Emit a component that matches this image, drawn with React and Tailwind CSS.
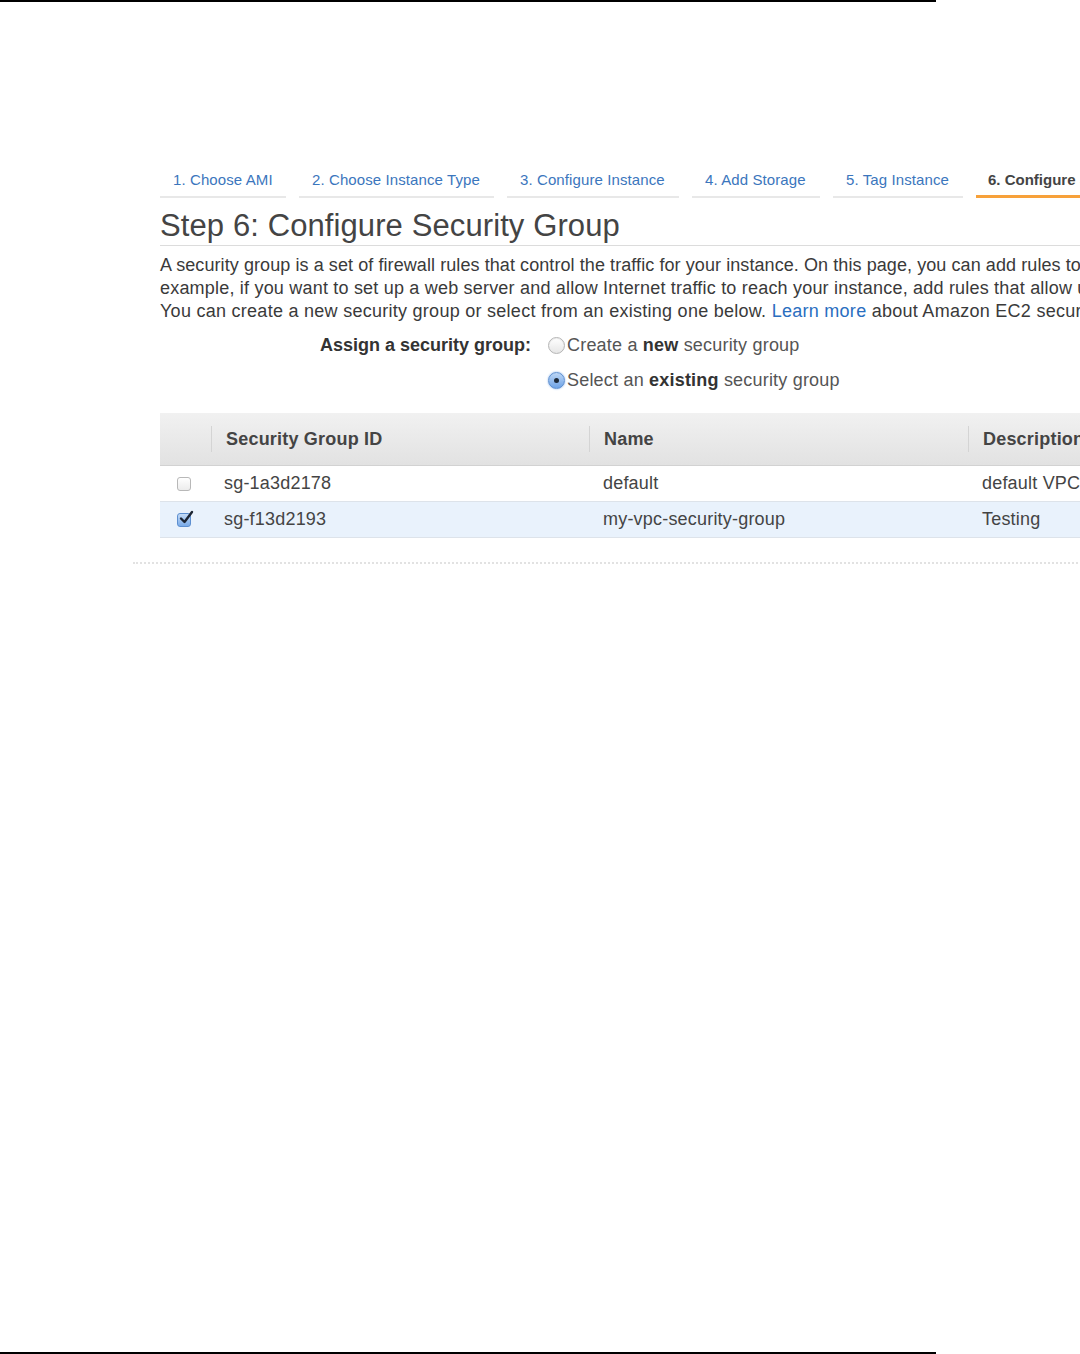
import React from "react";

const tabs = [
  { label: "1. Choose AMI", w: "w-[126px]" },
  { label: "2. Choose Instance Type", w: "w-[195px]" },
  { label: "3. Configure Instance", w: "w-[172px]" },
  { label: "4. Add Storage", w: "w-[128px]" },
  { label: "5. Tag Instance", w: "w-[130px]" },
];

const rows = [
  { id: "sg-1a3d2178", name: "default", desc: "default VPC security group", checked: false },
  { id: "sg-f13d2193", name: "my-vpc-security-group", desc: "Testing", checked: true },
];

function Radio({ checked }) {
  if (checked) {
    return (
      <span className="w-[17px] h-[17px] rounded-full border border-[#5d8fd0] bg-gradient-to-b from-[#bcd6f5] to-[#6fa3e6] flex items-center justify-center shadow-[0_0_2px_#7aa9e8]">
        <span className="w-[5px] h-[5px] rounded-full bg-[#1d2a3a]" />
      </span>
    );
  }
  return (
    <span className="w-[17px] h-[17px] rounded-full border border-[#b5b5b5] bg-gradient-to-b from-[#ffffff] to-[#e6e6e6] shadow-[inset_0_1px_1px_rgba(0,0,0,0.08)]" />
  );
}

function Checkbox({ checked }) {
  if (checked) {
    return (
      <span className="relative w-[14px] h-[14px] rounded-[3px] border border-[#5d8fd0] bg-gradient-to-b from-[#c4dbf6] to-[#7aabe8]">
        <svg viewBox="0 0 16 16" className="absolute -top-[4px] left-[0px] w-[16px] h-[16px]">
          <path d="M3 8.5 L6.5 12 L14 2" fill="none" stroke="#1c2533" strokeWidth="2.4" strokeLinecap="round" strokeLinejoin="round" />
        </svg>
      </span>
    );
  }
  return (
    <span className="w-[14px] h-[14px] rounded-[3px] border border-[#b8b8b8] bg-gradient-to-b from-[#ffffff] to-[#ececec]" />
  );
}

export default function App() {
  return (
    <div className="w-[1080px] h-[1354px] flex flex-col bg-white overflow-hidden font-['Liberation_Sans',Arial,sans-serif]">
      <div className="w-[936px] h-[2px] bg-black shrink-0" />

      <div className="pl-[160px] pt-[166px] flex-1 overflow-hidden">
        <div className="w-[1200px]">
          {/* Wizard tabs */}
          <div className="flex gap-[13px]">
            {tabs.map((t) => (
              <div
                key={t.label}
                className={`${t.w} px-[13px] pt-[3px] pb-[7px] border-b-[2px] border-[#e8e8e8] text-[15px] leading-[18px] text-[#3b76bd] tracking-[0.1px] whitespace-nowrap`}
              >
                {t.label}
              </div>
            ))}
            <div className="w-[200px] px-[12px] pt-[3px] pb-[6px] border-b-[3px] border-[#f7a13a] text-[15px] leading-[18px] text-[#444] font-bold whitespace-nowrap">
              6. Configure Security Group
            </div>
          </div>

          {/* Heading */}
          <h1 className="mt-[9px] pb-[1px] border-b border-[#dcdcdc] text-[31px] leading-[37px] text-[#444] tracking-[0.1px]">
            Step 6: Configure Security Group
          </h1>

          {/* Description */}
          <div className="mt-[8px] text-[18px] leading-[23px] text-[#3a3a3a] whitespace-nowrap">
            <p className="tracking-[0.08px]">
              A security group is a set of firewall rules that control the traffic for your instance. On this page, you can add rules to allow specific traffic to reach your instance. For
            </p>
            <p className="tracking-[0.2px]">
              example, if you want to set up a web server and allow Internet traffic to reach your instance, add rules that allow unrestricted access to the HTTP and HTTPS ports.
            </p>
            <p className="tracking-[0.27px]">
              You can create a new security group or select from an existing one below.{" "}
              <span className="text-[#2a6ebf]">Learn more</span> about Amazon EC2 security groups.
            </p>
          </div>

          {/* Assign */}
          <div className="mt-[5px] flex text-[18px] leading-[23px] text-[#555]">
            <div className="w-[371px] text-right font-bold text-[#333] pt-[6px]">Assign a security group:</div>
            <div className="ml-[17px] flex flex-col tracking-[0.2px]">
              <label className="h-[35px] flex items-center gap-[2px] whitespace-nowrap">
                <Radio checked={false} />
                <span>
                  Create a <b className="text-[#333]">new</b> security group
                </span>
              </label>
              <label className="h-[35px] flex items-center gap-[2px] whitespace-nowrap">
                <Radio checked />
                <span>
                  Select an <b className="text-[#333]">existing</b> security group
                </span>
              </label>
            </div>
          </div>

          {/* Table */}
          <div className="mt-[15px] text-[18px] tracking-[0.2px] text-[#444]">
            <div className="h-[53px] flex items-center bg-gradient-to-b from-[#f1f1f1] to-[#e2e2e2] border-b border-[#d2d2d2] font-bold">
              <div className="w-[52px] h-[26px] border-r border-[#d4d4d4]" />
              <div className="w-[378px] h-[26px] border-r border-[#d4d4d4] pl-[14px] leading-[26px]">Security Group ID</div>
              <div className="w-[379px] h-[26px] border-r border-[#d4d4d4] pl-[14px] leading-[26px]">Name</div>
              <div className="w-[380px] h-[26px] pl-[14px] leading-[26px]">Description</div>
            </div>
            {rows.map((r) => (
              <div
                key={r.id}
                className={`h-[36px] flex items-center border-b border-[#dde3ea] whitespace-nowrap ${r.checked ? "bg-[#e9f2fc]" : "bg-white"}`}
              >
                <div className="w-[52px] pl-[17px] flex items-center">
                  <Checkbox checked={r.checked} />
                </div>
                <div className="w-[378px] pl-[12px]">{r.id}</div>
                <div className="w-[379px] pl-[13px]">{r.name}</div>
                <div className="w-[380px] pl-[13px]">{r.desc}</div>
              </div>
            ))}
          </div>

          {/* faint cut-off line */}
          <div className="mt-[24px] -ml-[27px] w-[1000px] h-[3px] border-t-[2px] border-dotted border-[#e2e2e2]" />
        </div>
      </div>

      <div className="w-[936px] h-[2px] bg-black shrink-0" />
    </div>
  );
}
